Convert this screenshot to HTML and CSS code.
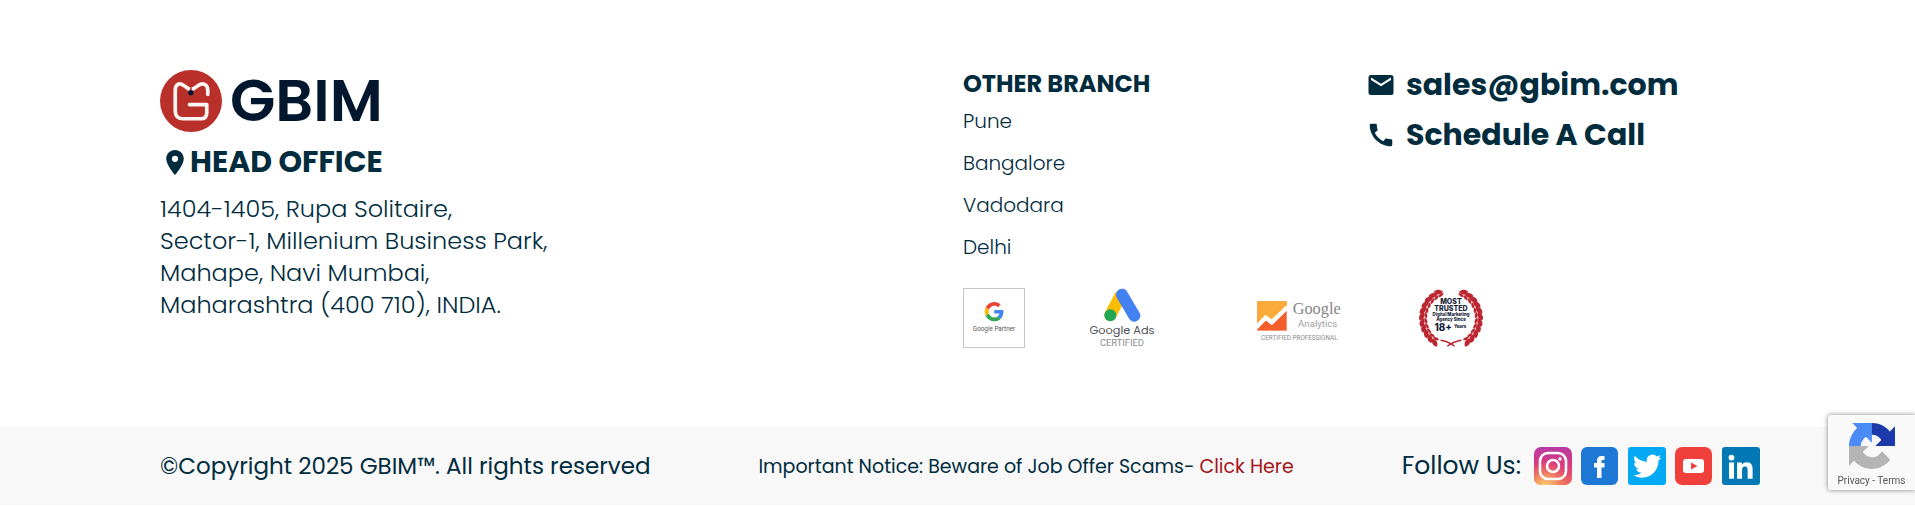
FILE: index.html
```html
<!DOCTYPE html>
<html lang="en">
<head>
<meta charset="utf-8">
<meta name="viewport" content="width=device-width, initial-scale=1">
<title>GBIM</title>
<link rel="stylesheet" href="styles.css">
</head>
<body>
<footer class="footer">
  <div class="footer-main">
    <section class="office">
      <a class="logo" href="#">
        <svg class="logo-mark" viewBox="0 0 61 61" aria-hidden="true">
          <circle cx="30.500" cy="30.500" r="30.500" fill="#b92f2a"/>
          <path d="M47 24V20C47 14 42 12 38 15L33 18.500H28L23 15C19 12 15 14 15 20V40Q15 48 23 48H40Q46 48 46 42V34H29" fill="none" stroke="#fff5f3" stroke-width="3.600" stroke-linecap="round" stroke-linejoin="round"/>
          <path d="M30.400 16V22" stroke="#b92f2a" stroke-width="1.500"/>
          <circle cx="30.400" cy="22.300" r="2.600" fill="#02162e"/>
        </svg>
        <span class="logo-name">GBIM</span>
      </a>
      <h2 class="office-title">
        <svg class="pin" viewBox="5 2 14 20" aria-hidden="true"><path fill="currentColor" d="M12 2C8.130 2 5 5.130 5 9c0 5.250 7 13 7 13s7-7.750 7-13c0-3.870-3.130-7-7-7zm0 9.500a2.500 2.500 0 0 1 0-5 2.500 2.500 0 0 1 0 5z"/></svg>
        HEAD OFFICE
      </h2>
      <address class="address">1404-1405, Rupa Solitaire,<br>Sector-1, Millenium Business Park,<br>Mahape, Navi Mumbai,<br>Maharashtra (400 710), INDIA.</address>
    </section>

    <div class="details">
      <section class="branches">
        <h3 class="branches-title">OTHER BRANCH</h3>
        <ul class="branch-list">
          <li>Pune</li>
          <li>Bangalore</li>
          <li>Vadodara</li>
          <li>Delhi</li>
        </ul>
      </section>
      <nav class="contact">
        <a class="contact-link" href="#">
          <svg class="contact-icon" viewBox="0 0 24 24" aria-hidden="true"><path fill="currentColor" d="M20 4H4a2 2 0 0 0-2 2v12a2 2 0 0 0 2 2h16a2 2 0 0 0 2-2V6a2 2 0 0 0-2-2zm0 4l-8 5-8-5V6l8 5 8-5v2z"/></svg>
          sales@gbim.com
        </a>
        <a class="contact-link" href="#">
          <svg class="contact-icon" viewBox="0 0 24 24" aria-hidden="true"><path fill="currentColor" d="M20.010 15.380c-1.230 0-2.420-.2-3.530-.560a.977.977 0 0 0-1.010.240l-1.570 1.970c-2.830-1.350-5.480-3.900-6.890-6.830l1.950-1.660c.270-.280.350-.670.240-1.020-.370-1.110-.560-2.300-.560-3.530 0-.540-.450-.990-.990-.990H4.190C3.650 3 3 3.240 3 3.990 3 13.280 10.730 21 20.010 21c.710 0 .990-.630.990-1.180v-3.450c0-.540-.450-.990-.990-.990z"/></svg>
          Schedule A Call
        </a>
      </nav>

      <div class="badges">
        <svg class="badge badge-partner" viewBox="0 0 186 180" role="img" aria-label="Google Partner">
          <rect x="1.500" y="1.500" width="183" height="177" fill="#fff" stroke="#c6c6c6" stroke-width="3"/>
          <g transform="translate(65 42) scale(1.200)">
            <path fill="#ea4335" d="M24 9.500c3.540 0 6.710 1.220 9.210 3.600l6.850-6.850C35.900 2.380 30.470 0 24 0 14.620 0 6.510 5.380 2.560 13.220l7.980 6.190C12.430 13.720 17.740 9.500 24 9.500z"/>
            <path fill="#4285f4" d="M46.980 24.550c0-1.570-.15-3.090-.38-4.550H24v9.020h12.940c-.58 2.960-2.260 5.480-4.780 7.180l7.730 6c4.510-4.180 7.090-10.360 7.090-17.650z"/>
            <path fill="#fbbc05" d="M10.530 28.590c-.48-1.450-.76-2.990-.76-4.590s.27-3.140.76-4.590l-7.980-6.190C.92 16.460 0 20.120 0 24c0 3.880.92 7.540 2.560 10.780l7.970-6.190z"/>
            <path fill="#34a853" d="M24 48c6.480 0 11.930-2.130 15.890-5.810l-7.730-6c-2.150 1.450-4.920 2.300-8.160 2.300-6.260 0-11.570-4.220-13.470-9.910l-7.980 6.190C6.510 42.620 14.620 48 24 48z"/>
          </g>
          <text class="badge-text" x="93" y="130" font-size="19" text-anchor="middle" fill="#555">Google Partner</text>
        </svg>
        <svg class="badge badge-ads" viewBox="0 0 198 180" role="img" aria-label="Google Ads Certified">
          <path d="M93 26L64 81" stroke="#fbbc04" stroke-width="36" stroke-linecap="round"/>
          <path d="M99 20L136 83" stroke="#4381f2" stroke-width="36" stroke-linecap="round"/>
          <circle cx="64" cy="82" r="18" fill="#22a652"/>
          <text class="badge-round" x="99" y="139" font-size="34" text-anchor="middle" fill="#4c5054">Google Ads</text>
          <text class="badge-text" x="99" y="173" font-size="28" text-anchor="middle" fill="#8a8d91">CERTIFIED</text>
        </svg>
        <svg class="badge badge-analytics" viewBox="0 -17 255 140" role="img" aria-label="Google Analytics Certified Professional">
          <rect x="1" y="2" width="88" height="88" fill="#f4602b"/>
          <path d="M1 2H89V19L44 65 26 51 1 76z" fill="#fbab3c"/>
          <path d="M-2 80L26 51 44 65 92 19" fill="none" stroke="#fff" stroke-width="13"/>
          <text class="badge-serif" x="107" y="39" font-size="49" fill="#858585">Google</text>
          <text class="badge-text" x="123" y="80" font-size="29" fill="#a3a3a3">Analytics</text>
          <text class="badge-text" x="127" y="117" font-size="19" text-anchor="middle" fill="#8c8c8c">CERTIFIED PROFESSIONAL</text>
        </svg>
        <svg class="badge badge-trusted" viewBox="0 0 190 176" role="img" aria-label="Most trusted digital marketing agency since 18+ years">
          <defs>
            <g id="leaf">
              <path d="M97 7C88 -5 77 -6 70 0C75 12 88 16 97 7z"/>
              <path d="M97 11C88 10 80 13 79 19C87 22 95 18 97 11z"/>
            </g>
            <g id="branch" fill="#bb2631">
              <use href="#leaf" transform="rotate(-18 95 90)"/>
              <use href="#leaf" transform="rotate(-30 95 90)"/>
              <use href="#leaf" transform="rotate(-42 95 90)"/>
              <use href="#leaf" transform="rotate(-54 95 90)"/>
              <use href="#leaf" transform="rotate(-66 95 90)"/>
              <use href="#leaf" transform="rotate(-78 95 90)"/>
              <use href="#leaf" transform="rotate(-90 95 90)"/>
              <use href="#leaf" transform="rotate(-102 95 90)"/>
              <use href="#leaf" transform="rotate(-114 95 90)"/>
              <use href="#leaf" transform="rotate(-126 95 90)"/>
              <use href="#leaf" transform="rotate(-138 95 90)"/>
              <path d="M64 155Q86 158 106 173" fill="none" stroke="#bb2631" stroke-width="4"/>
            </g>
          </defs>
          <use href="#branch"/>
          <use href="#branch" transform="translate(190 0) scale(-1 1)"/>
          <g class="badge-strong" fill="#141c33" text-anchor="middle">
            <text x="95" y="47" font-size="21">MOST</text>
            <text x="95" y="67" font-size="21">TRUSTED</text>
            <text x="95" y="82" font-size="13">Digital Marketing</text>
            <text x="95" y="98" font-size="13">Agency Since</text>
            <text x="72" y="127" font-size="29">18+</text>
            <text x="122" y="118" font-size="13">Years</text>
          </g>
        </svg>
      </div>
    </div>
  </div>

  <div class="footer-bar">
    <p class="copyright">©Copyright 2025 GBIM™. All rights reserved</p>
    <p class="notice">Important Notice: Beware of Job Offer Scams- <a class="notice-link" href="#">Click Here</a></p>
    <div class="social">
      <span class="social-label">Follow Us:</span>
      <a class="social-link" href="#" aria-label="Instagram">
        <svg viewBox="0 0 38 38">
          <defs>
            <linearGradient id="ig-base" x1="0" y1="0" x2="0" y2="1"><stop offset="0" stop-color="#b63aa5"/><stop offset=".45" stop-color="#d93a80"/><stop offset="1" stop-color="#ea6a5c"/></linearGradient>
            <radialGradient id="ig-glow" cx=".3" cy="1.050" r=".7"><stop offset="0" stop-color="#ffd97a"/><stop offset=".4" stop-color="#f9a35f" stop-opacity=".8"/><stop offset="1" stop-color="#f0625c" stop-opacity="0"/></radialGradient>
          </defs>
          <rect width="38" height="38" rx="7" fill="url(#ig-base)"/>
          <rect width="38" height="38" rx="7" fill="url(#ig-glow)"/>
          <rect x="6" y="6" width="26" height="26" rx="8" fill="none" stroke="#fff" stroke-width="2.600"/>
          <circle cx="19" cy="19" r="6" fill="none" stroke="#fff" stroke-width="2.600"/>
          <circle cx="26" cy="12" r="1.700" fill="#fff"/>
        </svg>
      </a>
      <a class="social-link" href="#" aria-label="Facebook">
        <svg viewBox="0 0 38 38"><rect width="37" height="38" rx="6" fill="#1c77d5"/><path fill="#fff" d="M16 31V20.500H13V16H16V13.500C16 10.500 18 9 20.500 9H23.500V13H21.800C20.800 13 20.500 13.500 20.500 14.500V16H23.500V20.500H20.500V31z"/></svg>
      </a>
      <a class="social-link" href="#" aria-label="Twitter">
        <svg viewBox="0 0 38 38"><rect width="38" height="38" rx="3" fill="#03a9f4"/><path fill="#fff" transform="translate(5 5) scale(1.180)" d="M23.953 4.570a10 10 0 01-2.825.775 4.958 4.958 0 002.163-2.723c-.951.555-2.005.959-3.127 1.184a4.920 4.920 0 00-8.384 4.482C7.690 8.095 4.067 6.130 1.640 3.162a4.822 4.822 0 00-.666 2.475c0 1.710.870 3.213 2.188 4.096a4.904 4.904 0 01-2.228-.616v.060a4.923 4.923 0 003.946 4.827 4.996 4.996 0 01-2.212.085 4.936 4.936 0 004.604 3.417 9.867 9.867 0 01-6.102 2.105c-.390 0-.779-.023-1.170-.067a13.995 13.995 0 007.557 2.209c9.053 0 13.998-7.496 13.998-13.985 0-.210 0-.420-.015-.630A9.935 9.935 0 0024 4.590z"/></svg>
      </a>
      <a class="social-link" href="#" aria-label="YouTube">
        <svg viewBox="0 0 38 38"><rect width="37" height="38" rx="7" fill="#ef403b"/><rect x="8" y="12" width="21" height="14" rx="3" fill="#fff"/><path fill="#ef403b" d="M16 15.500L22.500 19 16 22.500z"/></svg>
      </a>
      <a class="social-link" href="#" aria-label="LinkedIn">
        <svg viewBox="0 0 38 38"><rect width="38" height="38" rx="3" fill="#0279b5"/><path fill="#fff" transform="translate(2 3) scale(1.400)" d="M20.447 20.452h-3.554v-5.569c0-1.328-.027-3.037-1.852-3.037-1.853 0-2.136 1.445-2.136 2.939v5.667H9.351V9h3.414v1.561h.046c.477-.9 1.637-1.850 3.370-1.850 3.601 0 4.267 2.370 4.267 5.455v6.286zM5.337 7.433a2.062 2.062 0 01-2.063-2.065 2.064 2.064 0 112.063 2.065zm1.782 13.019H3.555V9h3.564v11.452z"/></svg>
      </a>
    </div>
  </div>
</footer>

<aside class="captcha">
  <svg class="captcha-logo" viewBox="0 0 64 64" aria-hidden="true">
    <path fill="#1c3aa9" d="M64 31.955l-.033-1.370V4.687l-7.160 7.160C50.948 4.674 42.033.093 32.050.093c-10.400 0-19.622 4.960-25.458 12.640l11.736 11.860a15.550 15.550 0 0 1 4.754-5.334c2.050-1.600 4.952-2.906 8.968-2.906.485 0 .860.057 1.135.163 4.976.393 9.288 3.140 11.828 7.124l-8.307 8.307L64 31.953"/>
    <path fill="#4a8bf5" d="M31.862.094l-1.370.033H4.594l7.160 7.160C4.580 13.147 0 22.060 0 32.046c0 10.400 4.960 19.622 12.640 25.458L24.500 45.768a15.550 15.550 0 0 1-5.334-4.754c-1.600-2.050-2.906-4.952-2.906-8.968 0-.485.057-.860.163-1.135.393-4.976 3.140-9.288 7.124-11.828l8.307 8.307L31.860.095"/>
    <path fill="#b4b4b4" d="M.001 32.045l.033 1.370v25.898l7.160-7.160c5.860 7.173 14.774 11.754 24.760 11.754 10.400 0 19.622-4.960 25.458-12.640l-11.736-11.860a15.550 15.550 0 0 1-4.754 5.334c-2.050 1.600-4.952 2.906-8.968 2.906-.485 0-.860-.057-1.135-.163-4.976-.393-9.288-3.140-11.828-7.124l8.307-8.307c-10.522.040-22.400.066-27.295-.005"/>
  </svg>
  <div class="captcha-links"><a href="#">Privacy</a> - <a href="#">Terms</a></div>
</aside>
</body>
</html>
```

FILE: styles.css
```css
* {
  box-sizing: border-box;
}

body {
  margin: 0;
  background: #fff;
  color: #002c3e;
  font-family: Poppins, Inter, "Liberation Sans", sans-serif;
}

h2, h3, p, ul {
  margin: 0;
  padding: 0;
}

a {
  color: inherit;
  text-decoration: none;
}

svg {
  display: block;
  flex: none;
}

.footer-main {
  display: grid;
  grid-template-columns: 803fr 797fr;
  padding: 70px 155px 78px 160px;
}

.logo {
  display: flex;
  align-items: center;
  gap: 8px;
  color: #02162e;
}

.logo-mark {
  width: 62px;
  height: 62px;
}

.logo-name {
  font-size: 59px;
  line-height: 62px;
  font-weight: 600;
}

.office-title {
  display: flex;
  align-items: center;
  gap: 6px;
  margin: 12px 0 13px 6px;
  font-size: 30px;
  line-height: 36px;
  font-weight: 700;
}

.pin {
  width: 18px;
  height: 25px;
}

.address {
  font-size: 24px;
  line-height: 32px;
  font-style: normal;
  font-weight: 300;
}

.details {
  display: grid;
  grid-template-columns: 403fr 394fr;
  align-content: start;
}

.branches-title {
  margin-bottom: 2px;
  font-size: 24px;
  line-height: 28px;
  font-weight: 700;
}

.branch-list {
  list-style: none;
  font-size: 20px;
  line-height: 42px;
  font-weight: 300;
}

.contact {
  display: flex;
  flex-direction: column;
  align-items: flex-start;
  gap: 20px;
  line-height: 30px;
  font-size: 30px;
  font-weight: 700;
}

.contact-link {
  display: flex;
  align-items: center;
  gap: 10px;
}

.contact-icon {
  width: 30px;
  height: 30px;
}

.badges {
  grid-column: 1 / -1;
  display: flex;
  align-items: center;
  height: 62px;
  margin-top: 19px;
}

.badge-partner {
  width: 62px;
  margin-right: 64px;
}

.badge-ads {
  width: 66px;
  margin-right: 102px;
}

.badge-analytics {
  width: 85px;
  margin-right: 77px;
}

.badge-trusted {
  width: 64px;
}

.badge-text {
  font-family: Roboto, sans-serif;
}

.badge-round {
  font-family: Poppins, Roboto, sans-serif;
}

.badge-serif {
  font-family: "Liberation Serif", serif;
}

.badge-strong {
  font-family: Inter, sans-serif;
  font-weight: 800;
}

.footer-bar {
  display: flex;
  align-items: center;
  justify-content: space-between;
  min-height: 78px;
  padding: 0 155px 0 160px;
  background: #f8f8f8;
}

.copyright {
  font-size: 23px;
}

.notice {
  font-size: 19px;
}

.notice-link {
  color: #a3131a;
}

.social {
  display: flex;
  align-items: center;
  gap: 9px;
}

.social-label {
  margin-right: 4px;
  font-size: 25px;
}

.social-link svg {
  width: 38px;
  height: 38px;
}

.captcha {
  position: fixed;
  right: 0;
  bottom: 16px;
  width: 87px;
  height: 75px;
  padding: 8px 0 0;
  background: #f9f9f9;
  border-radius: 3px 0 0 3px;
  box-shadow: 0 0 5px #808080;
  color: #555;
}

.captcha-logo {
  width: 46px;
  height: 46px;
  margin: 0 auto 5px 21px;
}

.captcha-links {
  font-family: Roboto, sans-serif;
  font-size: 10px;
  line-height: 14px;
  text-align: center;
}
```
